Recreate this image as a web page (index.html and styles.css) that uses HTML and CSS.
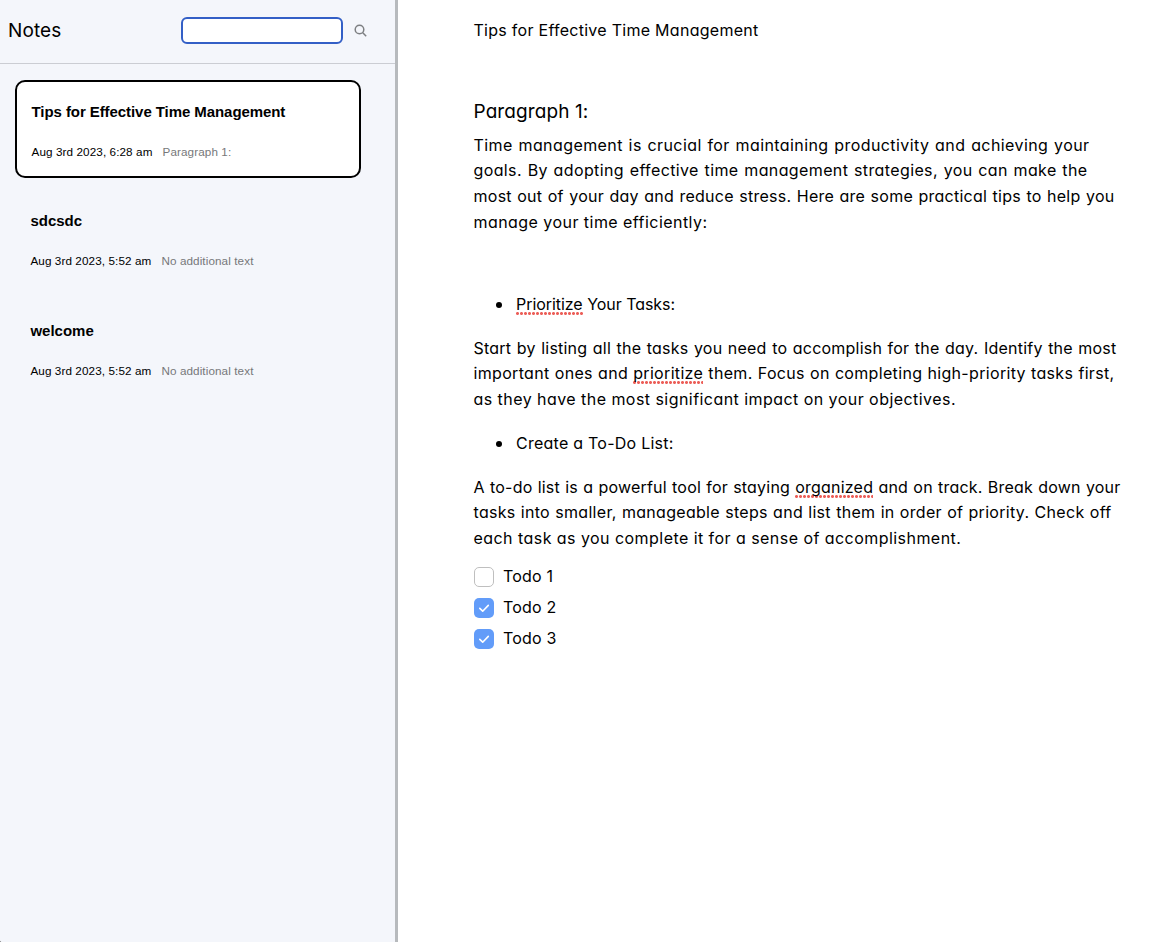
FILE: index.html
```html
<!DOCTYPE html>
<html lang="en">
<head>
<meta charset="utf-8">
<title>Notes</title>
<link rel="stylesheet" href="styles.css">
</head>
<body>
<div class="app">
  <aside class="sidebar">
    <header class="sidebar-header">
      <h1 class="brand">Notes</h1>
      <input class="search" type="text" aria-label="Search notes">
      <svg class="search-icon" viewBox="0 0 14 14" aria-hidden="true"><circle cx="5.5" cy="5.5" r="4.3"/><path d="M8.8 8.8l3.4 3.4"/></svg>
    </header>
    <div class="note-list">
      <article class="note note-active">
        <h2 class="note-title">Tips for Effective Time Management</h2>
        <p class="note-meta"><span class="date">Aug 3rd 2023, 6:28 am</span><span class="excerpt">Paragraph 1:</span></p>
      </article>
      <article class="note">
        <h2 class="note-title">sdcsdc</h2>
        <p class="note-meta"><span class="date">Aug 3rd 2023, 5:52 am</span><span class="excerpt">No additional text</span></p>
      </article>
      <article class="note">
        <h2 class="note-title">welcome</h2>
        <p class="note-meta"><span class="date">Aug 3rd 2023, 5:52 am</span><span class="excerpt">No additional text</span></p>
      </article>
    </div>
  </aside>
  <main class="editor">
    <div class="title"><span class="line" style="width:285px;letter-spacing:.27px">Tips for Effective Time Management</span></div>
    <h2 class="heading">Paragraph 1:</h2>
    <p class="para">
      <span class="line" style="width:616px;letter-spacing:.42px">Time management is crucial for maintaining productivity and achieving your</span>
      <span class="line" style="width:614px;letter-spacing:.38px">goals. By adopting effective time management strategies, you can make the</span>
      <span class="line" style="width:641px;letter-spacing:.26px">most out of your day and reduce stress. Here are some practical tips to help you</span>
      <span class="line" style="width:234px;letter-spacing:.45px">manage your time efficiently:</span>
    </p>
    <ul class="bullets first"><li><span class="line" style="width:159px;letter-spacing:-.05px"><span class="misspelt">Prioritize</span> Your Tasks:</span></li></ul>
    <p class="para">
      <span class="line" style="width:643px;letter-spacing:.22px">Start by listing all the tasks you need to accomplish for the day. Identify the most</span>
      <span class="line" style="width:641px;letter-spacing:.33px">important ones and <span class="misspelt">prioritize</span> them. Focus on completing high-priority tasks first,</span>
      <span class="line" style="width:482px;letter-spacing:.45px">as they have the most significant impact on your objectives.</span>
    </p>
    <ul class="bullets"><li><span class="line" style="width:157px;letter-spacing:.25px">Create a To-Do List:</span></li></ul>
    <p class="para">
      <span class="line" style="width:647px;letter-spacing:.2px">A to-do list is a powerful tool for staying <span class="misspelt">organized</span> and on track. Break down your</span>
      <span class="line" style="width:638px;letter-spacing:.3px">tasks into smaller, manageable steps and list them in order of priority. Check off</span>
      <span class="line" style="width:487px;letter-spacing:.45px">each task as you complete it for a sense of accomplishment.</span>
    </p>
    <ul class="todos">
      <li class="todo"><span class="box"></span>Todo 1</li>
      <li class="todo"><span class="box checked"><svg viewBox="0 0 20 20"><path d="M5.8 10.4l2.9 2.8 5.6-5.8"/></svg></span>Todo 2</li>
      <li class="todo"><span class="box checked"><svg viewBox="0 0 20 20"><path d="M5.8 10.4l2.9 2.8 5.6-5.8"/></svg></span>Todo 3</li>
    </ul>
  </main>
</div>
</body>
</html>
```
FILE: styles.css
```css
* { box-sizing: border-box; }
html { background: #222; }
body { margin: 0; color: #000; font-family: Inter, "Liberation Sans", sans-serif; }
h1, h2, p, ul { margin: 0; padding: 0; font-weight: 400; }
ul { list-style: none; }
.app { display: flex; height: 942px; overflow: hidden; background: #fff; border-bottom-left-radius: 2px; }

.sidebar { width: 398px; flex: none; background: #f4f6fb; border-right: 3px solid #b7babd; }
.sidebar-header { display: flex; align-items: center; height: 64px; padding: 0 0 3px 8px; border-bottom: 1px solid #cbcdd3; }
.brand { width: 173px; padding-top: 2px; font-size: 19px; line-height: 28px; letter-spacing: .1px; font-feature-settings: "cv11"; }
.search { width: 162px; height: 27px; border: 2px solid #335fc6; border-radius: 6px; background: #fff; outline: none; }
.search-icon { width: 14px; height: 14px; margin: 2px 0 0 11px; fill: none; stroke: #7d7f82; stroke-width: 1.5; }

.note-list { display: flex; flex-direction: column; padding: 16px 34px 0 15px; font-family: "Liberation Sans", Arial, sans-serif; }
.note { height: 109.5px; padding: 23px 15px 0 15.4px; }
.note-active { height: 98px; margin-bottom: 11px; padding: 20.5px 14.5px 0; background: #fff; border: 2px solid #000; border-radius: 10px; }
.note-title { font-size: 15px; font-weight: 700; line-height: 18px; }
.note-active .note-title { letter-spacing: -.07px; }
.note-meta { display: flex; gap: 10px; margin-top: 23px; font-size: 11.7px; line-height: 16px; letter-spacing: .1px; }
.date { width: 121px; white-space: nowrap; }
.excerpt { color: #77787a; }

.editor { flex: 1; padding: 18px 0 0 75.5px; font-size: 16px; line-height: 25.6px; font-feature-settings: "cv11"; }
.line { display: block; white-space: nowrap; text-align: justify; text-align-last: justify; }
.title { height: 80.4px; }
.heading { height: 34.5px; font-size: 19px; line-height: 28px; letter-spacing: .1px; }
.bullets { padding: 18px 0 18.4px 42.5px; }
.bullets.first { padding: 57px 0 18px 42.5px; }
.bullets li { position: relative; }
.bullets li::before { content: ""; position: absolute; left: -20px; top: 10px; width: 6px; height: 6px; border-radius: 50%; background: #000; }
.misspelt { padding-bottom: 1px; background: radial-gradient(circle at 1.5px 1.5px, #ec5f59 1.2px, transparent 1.7px) 0 100% / 4px 3px repeat-x; }
.todos { display: flex; flex-direction: column; gap: 11px; padding-top: 15.3px; }
.todo { display: flex; align-items: center; gap: 9.5px; height: 20px; letter-spacing: .2px; }
.box { width: 20px; height: 20px; border: 1px solid #bfbfbf; border-radius: 5px; }
.box.checked { border: 0; background: #629cf9; }
.box svg { display: block; fill: none; stroke: #fff; stroke-width: 1.6; stroke-linecap: round; stroke-linejoin: round; }
```
